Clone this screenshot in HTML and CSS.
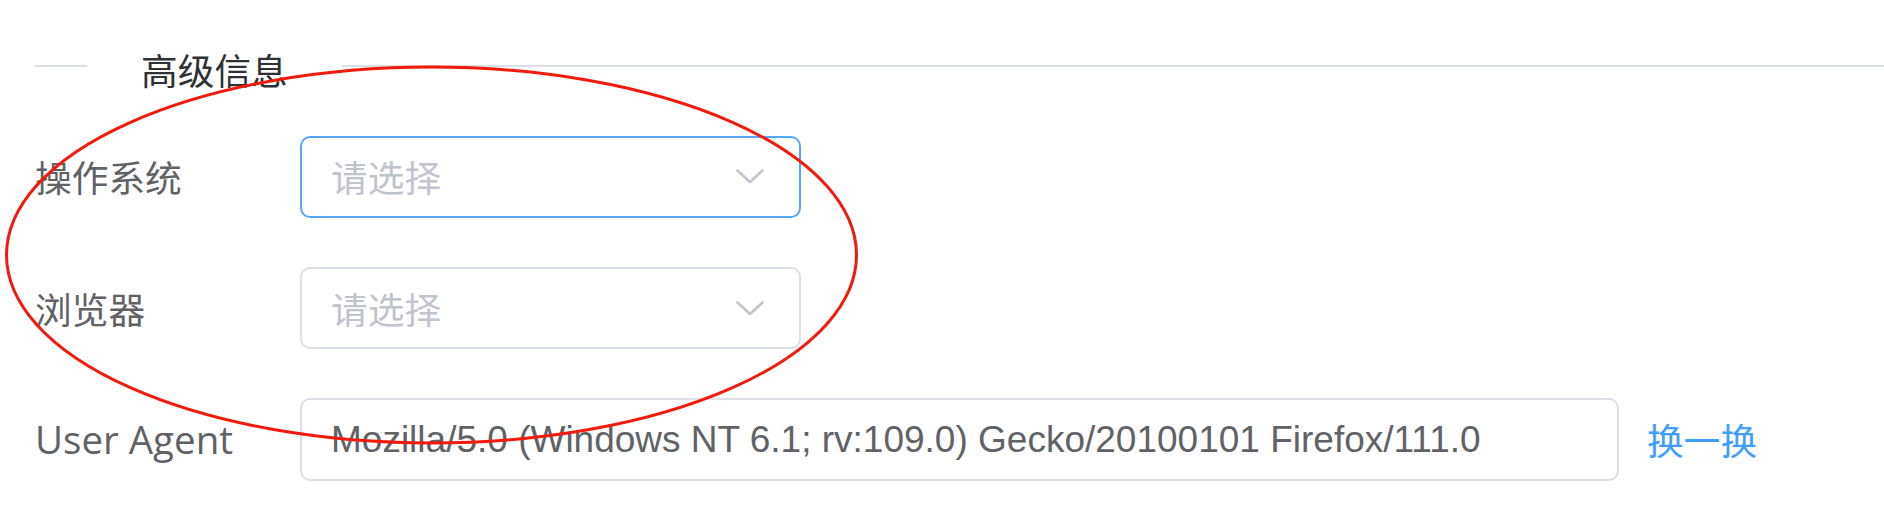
FILE: index.html
```html
<!DOCTYPE html>
<html lang="zh-CN">
<head>
<meta charset="utf-8">
<title>高级信息</title>
<link rel="stylesheet" href="styles.css">
</head>
<body>
<div class="page">
  <div class="divider">
    <span class="divider-line divider-line--short"></span>
    <span class="divider-text">高级信息</span>
    <span class="divider-line divider-line--long"></span>
  </div>

  <form class="form">
    <div class="form-row">
      <label class="form-label">操作系统</label>
      <div class="select select--focus">
        <span class="select-placeholder">请选择</span>
        <svg class="select-arrow" viewBox="0 0 28 15" width="28" height="15"><polyline points="1.5,1.5 14,13 26.5,1.5" /></svg>
      </div>
    </div>
    <div class="form-row">
      <label class="form-label">浏览器</label>
      <div class="select">
        <span class="select-placeholder">请选择</span>
        <svg class="select-arrow" viewBox="0 0 28 15" width="28" height="15"><polyline points="1.5,1.5 14,13 26.5,1.5" /></svg>
      </div>
    </div>
    <div class="form-row">
      <label class="form-label form-label--latin">User Agent</label>
      <div class="input">Mozilla/5.0 (Windows NT 6.1; rv:109.0) Gecko/20100101 Firefox/111.0</div>
      <a class="link" href="#">换一换</a>
    </div>
  </form>

  <svg class="annotation" width="1884" height="525" viewBox="0 0 1884 525">
    <ellipse cx="431.5" cy="255" rx="425" ry="188" />
  </svg>
</div>
</body>
</html>
```

FILE: styles.css
```css
html, body {
  margin: 0;
  padding: 0;
  background: #ffffff;
}

body {
  font-family: "Noto Sans CJK SC", "Liberation Sans", sans-serif;
  font-size: 36.7px;
  color: #606266;
}

.page {
  position: relative;
  width: 1884px;
  height: 525px;
  overflow: hidden;
  padding: 46px 0 0 35px;
  box-sizing: border-box;
}

/* divider with legend */
.divider {
  display: flex;
  align-items: center;
  height: 40px;
}

.divider-line {
  height: 2px;
  background: #dcdfe6;
}

.divider-line--short {
  width: 52px;
  flex: none;
}

.divider-line--long {
  flex: 1;
}

.divider-text {
  padding: 0 54px;
  line-height: 40px;
  color: #303133;
  position: relative;
  top: 3px;
  white-space: nowrap;
}

/* form */
.form {
  display: flex;
  flex-direction: column;
  gap: 49.5px;
  margin-top: 49.5px;
}

.form-row {
  display: flex;
  align-items: center;
  height: 82px;
}

.form-label {
  width: 265px;
  flex: none;
  line-height: 1;
  color: #606266;
}

.form-label--latin {
  font-family: "Open Sans", "Noto Sans CJK SC", sans-serif;
  font-size: 38.5px;
}

.select {
  width: 501px;
  height: 82px;
  box-sizing: border-box;
  border: 2px solid #dcdfe6;
  border-radius: 10px;
  display: flex;
  align-items: center;
  justify-content: space-between;
  padding: 0 35px 0 29px;
}

.select--focus {
  border-color: #53a8ff;
}

.select-placeholder {
  color: #c0c4cc;
  line-height: 1;
}

.select-arrow {
  display: block;
}

.select-arrow polyline {
  fill: none;
  stroke: #c0c4cc;
  stroke-width: 2.6;
  stroke-linecap: round;
  stroke-linejoin: round;
}

.input {
  width: 1319px;
  height: 83px;
  box-sizing: border-box;
  border: 2px solid #dcdfe6;
  border-radius: 10px;
  display: flex;
  align-items: center;
  padding: 0 29px;
  font-family: "Liberation Sans", Arial, sans-serif;
  font-size: 37px;
  color: #606266;
  white-space: nowrap;
  overflow: hidden;
}

.link {
  margin-left: 28px;
  color: #409eff;
  text-decoration: none;
  line-height: 1;
}

/* red hand-drawn annotation lying over the form */
.annotation {
  position: absolute;
  left: 0;
  top: 0;
  pointer-events: none;
}

.annotation ellipse {
  fill: none;
  stroke: #f21a0a;
  stroke-width: 3;
}
```
